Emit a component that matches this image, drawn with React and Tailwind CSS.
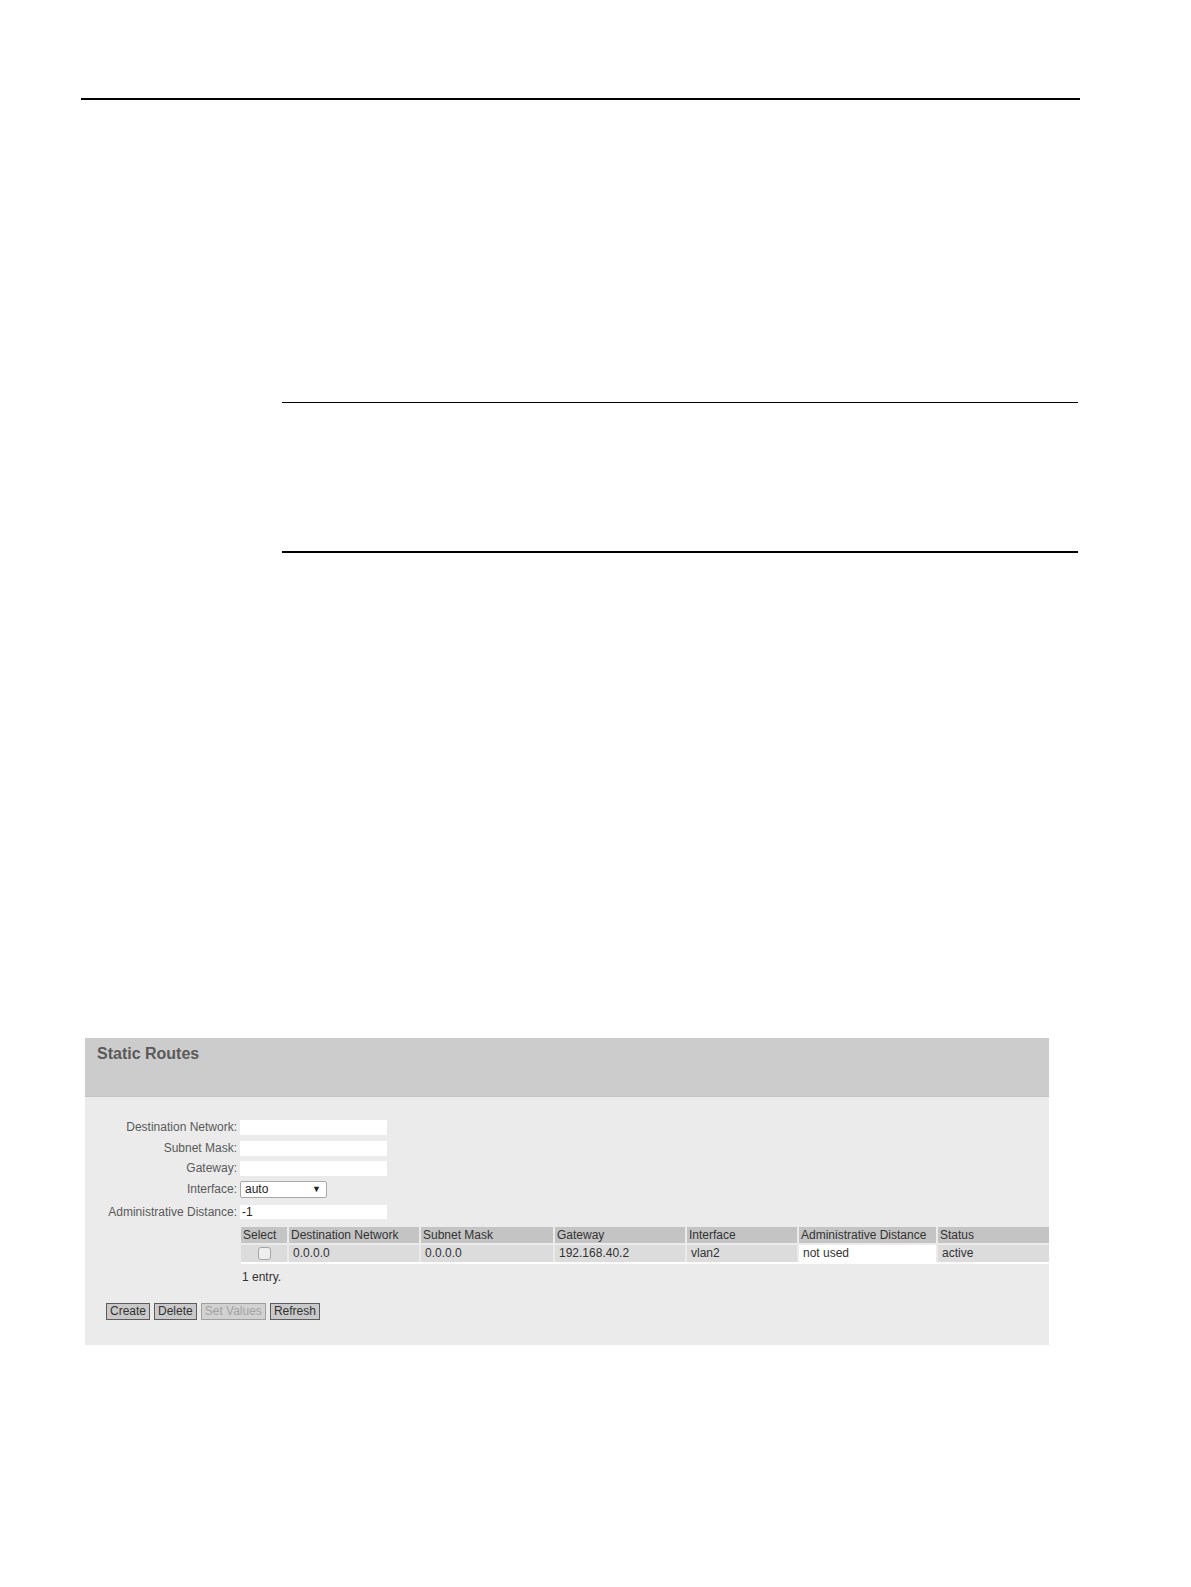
import React from 'react';

const fields = [
    { label: 'Destination Network:', value: '', mt: 'mt-[23px]' },
    { label: 'Subnet Mask:', value: '', mt: 'mt-[6px]' },
    { label: 'Gateway:', value: '', mt: 'mt-[5px]' },
];

const columns = [
    { name: 'Select', w: 'w-[46px]' },
    { name: 'Destination Network', w: 'w-[130px]' },
    { name: 'Subnet Mask', w: 'w-[132px]' },
    { name: 'Gateway', w: 'w-[130px]' },
    { name: 'Interface', w: 'w-[110px]' },
    { name: 'Administrative Distance', w: 'w-[137px]' },
    { name: 'Status', w: 'flex-1' },
];

const row = ['', '0.0.0.0', '0.0.0.0', '192.168.40.2', 'vlan2', 'not used', 'active'];

const FormRow = ({ label, children, mt }) => (
    <div className={`flex items-center ${mt}`}>
        <span className="w-[152px] text-right text-[12px] leading-[14px] text-[#5a5a5a]">{label}</span>
        <div className="ml-[3px]">{children}</div>
    </div>
);

const Button = ({ children, disabled }) => (
    <button
        type="button"
        className={
            disabled
                ? 'h-[17px] px-[3px] border border-[#a0a0a0] bg-[#d2d2d2] text-[12px] leading-[14px] text-[#a3a3a3]'
                : 'h-[17px] px-[3px] border border-[#5c5c5c] bg-[#c9c9c9] text-[12px] leading-[14px] text-[#333]'
        }
    >
        {children}
    </button>
);

const StaticRoutes = () => (
    <div className="ml-[85px] w-[964px] bg-[#ebebeb]">
        <div className="h-[59px] bg-[#cccccc] border-b border-[#c4c4c4] pl-[12px] pt-[6px]">
            <p className="text-[16px] leading-[19px] font-bold text-[#5a5a5a]">Static Routes</p>
        </div>

        {fields.map((f) => (
            <FormRow key={f.label} label={f.label} mt={f.mt}>
                <div className="w-[147px] h-[15px] bg-white" />
            </FormRow>
        ))}

        <FormRow label="Interface:" mt="mt-[5px]">
            <div className="w-[87px] h-[17px] bg-white border border-[#a8a8a8] rounded-[2px] flex items-center justify-between pl-[4px] pr-[5px]">
                <span className="text-[12px] leading-[14px] text-[#222]">auto</span>
                <span className="text-[9px] leading-[10px] text-[#222]">▼</span>
            </div>
        </FormRow>

        <FormRow label="Administrative Distance:" mt="mt-[7px]">
            <div className="w-[147px] h-[14px] bg-white flex items-center pl-[2px]">
                <span className="text-[12px] leading-[14px] text-[#222]">-1</span>
            </div>
        </FormRow>

        <div className="ml-[156px] mt-[8px] flex flex-col gap-[2px]">
            <div className="flex gap-[2px] h-[16px]">
                {columns.map((c) => (
                    <div key={c.name} className={`${c.w} bg-[#c4c4c4] pl-[2px] flex items-center`}>
                        <span className="text-[12px] leading-[14px] text-[#333] whitespace-nowrap">{c.name}</span>
                    </div>
                ))}
            </div>
            <div className="flex gap-[2px] h-[19px] border-b-2 border-white">
                {columns.map((c, i) => (
                    <div
                        key={c.name}
                        className={`${c.w} ${i === 5 ? 'bg-white' : 'bg-[#dcdcdc]'} ${i === 0 ? 'justify-center' : 'pl-[4px]'} flex items-center`}
                    >
                        {i === 0 ? (
                            <div className="w-[13px] h-[13px] rounded-[3px] border border-[#a5a5a5] bg-[#eeeeee]" />
                        ) : (
                            <span className="text-[12px] leading-[14px] text-[#333] whitespace-nowrap">{row[i]}</span>
                        )}
                    </div>
                ))}
            </div>
        </div>

        <p className="ml-[157px] mt-[6px] text-[12px] leading-[14px] text-[#333]">1 entry.</p>

        <div className="ml-[21px] mt-[19px] pb-[25px] flex gap-[4px]">
            <Button>Create</Button>
            <Button>Delete</Button>
            <Button disabled>Set Values</Button>
            <Button>Refresh</Button>
        </div>
    </div>
);

const App = () => {
    return (
        <div className="w-[1191px] h-[1587px] bg-white font-['Liberation_Sans',Arial,sans-serif]">
            <div className="pt-[98px] ml-[81px] w-[999px]">
                <div className="h-[1.5px] bg-black" />
            </div>
            <div className="mt-[302px] ml-[282px] w-[796px]">
                <div className="h-[1.5px] bg-black" />
            </div>
            <div className="mt-[148px] ml-[282px] w-[796px]">
                <div className="h-[1.5px] bg-black" />
            </div>
            <div className="mt-[485px]">
                <StaticRoutes />
            </div>
        </div>
    );
};

export default App;
